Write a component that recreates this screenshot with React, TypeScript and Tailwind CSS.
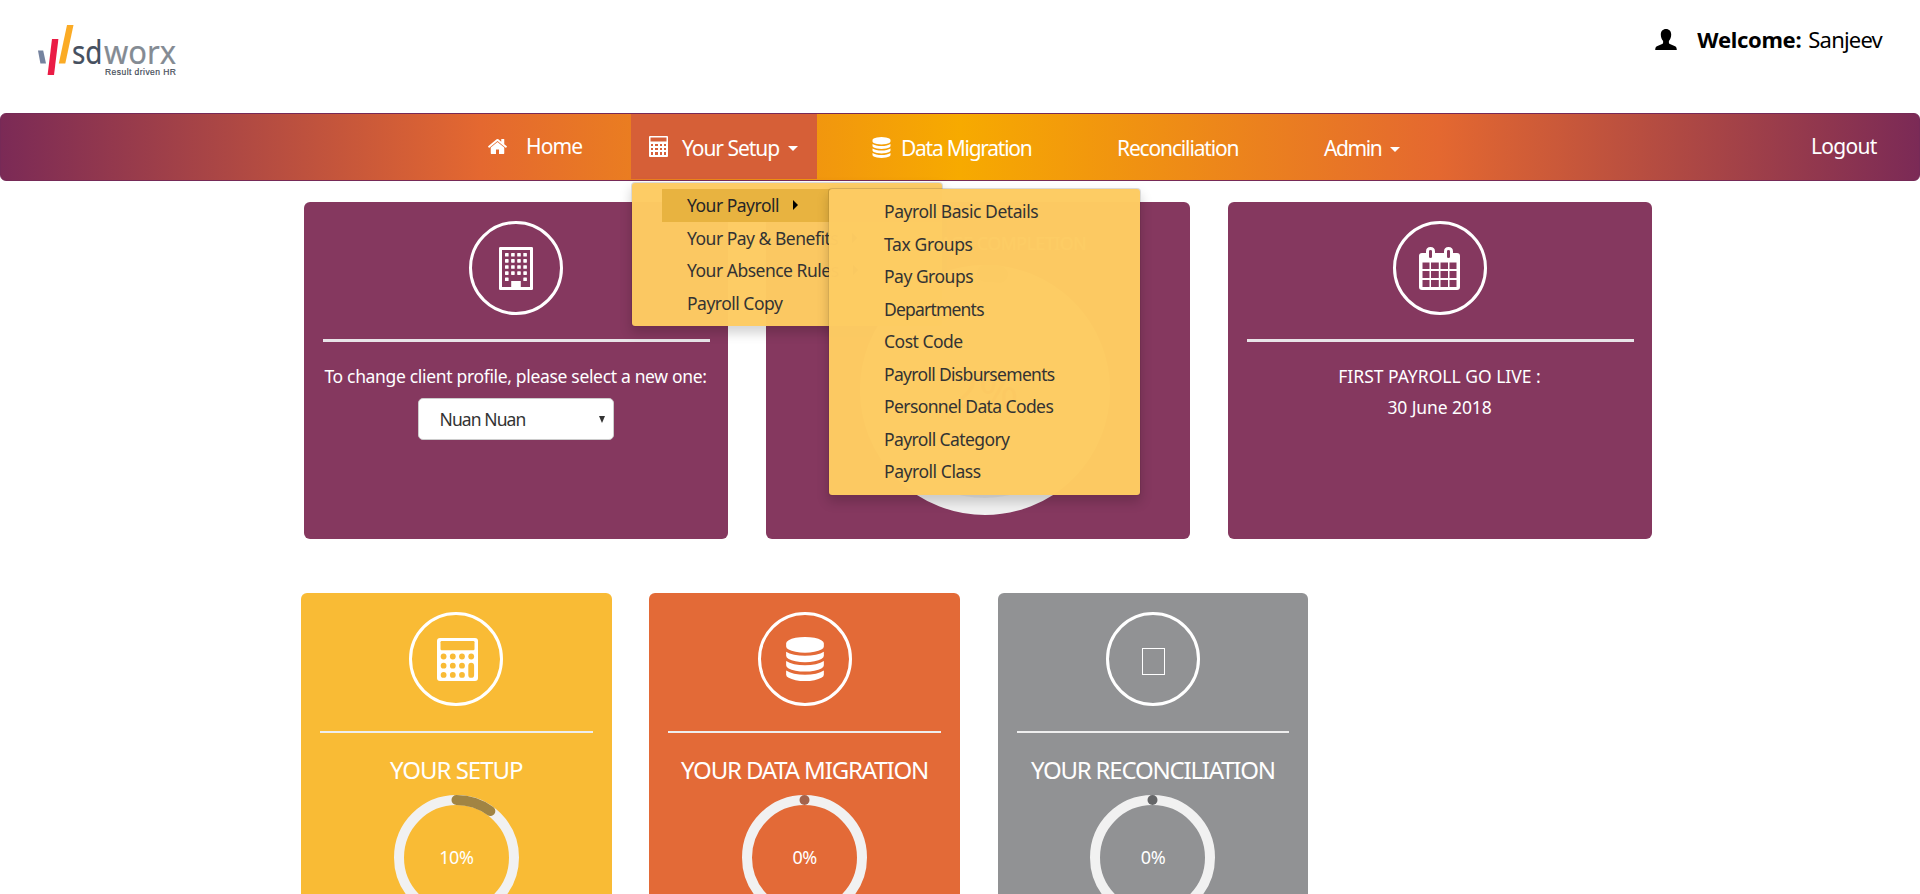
import React from "react";

const HOME =
  "M1472 992v480q0 26-19 45t-45 19h-384v-384h-256v384h-384q-26 0-45-19t-19-45v-480q0-1 .5-3t.5-3l575-474 575 474q1 2 1 6zm223-69l-62 74q-8 9-21 11h-3q-13 0-21-7l-692-577-692 577q-12 8-24 7-13-2-21-11l-62-74q-8-10-7-23.5t11-21.5l719-599q32-26 76-26t76 26l244 204v-195q0-14 9-23t23-9h192q14 0 23 9t9 23v408l219 182q10 8 11 21.5t-7 23.5z";
const DATABASE =
  "M896 768q237 0 443-43t325-127v170q0 69-103 128t-280 93.5-385 34.5-385-34.5-280-93.5-103-128v-170q119 84 325 127t443 43zm0 768q237 0 443-43t325-127v170q0 69-103 128t-280 93.5-385 34.5-385-34.5-280-93.5-103-128v-170q119 84 325 127t443 43zm0-384q237 0 443-43t325-127v170q0 69-103 128t-280 93.5-385 34.5-385-34.5-280-93.5-103-128v-170q119 84 325 127t443 43zm0-1152q208 0 385 34.5t280 93.5 103 128v128q0 69-103 128t-280 93.5-385 34.5-385-34.5-280-93.5-103-128v-128q0-69 103-128t280-93.5 385-34.5z";

function Logo() {
  return (
    <svg width="142" height="54" viewBox="0 0 142 54" className="block">
      <path d="M0 25.5h5.2L8 38.5H2.4z" fill="#75839f" />
      <path d="M14 14h6.4l-4.4 36H9.6z" fill="#ea1c45" />
      <path d="M29 0h6.5l-8.2 38.500h-6.500z" fill="#fbab25" />
      <text x="34" y="38.500" fontFamily="'Noto Sans', sans-serif" fontSize="32" textLength="30.500" lengthAdjust="spacingAndGlyphs" fill="#46505f" stroke="#46505f" strokeWidth="0.2">
        sd
      </text>
      <text x="66" y="38.500" fontFamily="'Noto Sans', sans-serif" fontSize="32" textLength="72" lengthAdjust="spacingAndGlyphs" fill="#848b93" stroke="#848b93" strokeWidth="0.2">
        worx
      </text>
      <text x="67" y="49.700" fontFamily="'Liberation Sans', sans-serif" fontSize="8.500" textLength="71" stroke="#444c58" strokeWidth="0.2" fill="#444c58">
        Result driven HR
      </text>
    </svg>
  );
}

function UserIcon() {
  return (
    <svg width="22" height="21" viewBox="0 0 22 21" className="block">
      <path d="M11 0c3.200 0 5.200 2.200 5.200 5.600 0 2.800-1 5-2.300 6.400v1.600c0 .8.3 1.200 1 1.500l4.600 1.900c1.600.7 2.200 1.600 2.300 4H.2c.1-2.400.7-3.300 2.300-4l4.600-1.900c.7-.3 1-.7 1-1.500V12C6.800 10.600 5.800 8.400 5.800 5.600 5.800 2.200 7.800 0 11 0z" />
    </svg>
  );
}

function CalcGridIcon() {
  return (
    <svg width="19" height="21" viewBox="0 0 19 21" className="block" fill="white" fillRule="evenodd">
      <path d="M1 0h17a1 1 0 0 1 1 1v19a1 1 0 0 1-1 1H1a1 1 0 0 1-1-1V1a1 1 0 0 1 1-1zM1.500 1.500v4h16v-4zM2 8v2h2V8zM6 8v2h3V8zM11 8v2h2V8zM15 8v2h2V8zM2 12v2h2v-2zM6 12v2h3v-2zM11 12v2h2v-2zM15 12v2h2v-2zM2 16v3h2v-3zM6 16v3h3v-3zM11 16v3h2v-3zM15 16v3h2v-3z" />
    </svg>
  );
}

function BuildingIcon() {
  const dots: [number, number][] = [];
  for (let r = 0; r < 5; r++)
    for (let c = 0; c < 4; c++) if (r < 4 || c === 0 || c === 3) dots.push([6 + c * 6.1, 6 + r * 6.1]);
  return (
    <svg width="34" height="43" viewBox="0 0 34 43" className="block" fill="white">
      <path fillRule="evenodd" d="M1.200 0h31.600q1.200 0 1.200 1.200v40.600q0 1.200-1.200 1.200H1.200Q0 43 0 41.800V1.200Q0 0 1.200 0zM3 3v37h9.200v-6h9.600v6H31V3z" />
      {dots.map(([x, y]) => (
        <rect key={`${x}-${y}`} x={x} y={y} width="3.6" height="3.6" rx="0.6" />
      ))}
    </svg>
  );
}

function CalendarIcon() {
  return (
    <svg width="41" height="43" viewBox="0 0 41 43" className="block" fill="white">
      <path fillRule="evenodd" d="M3 6h4V4.500Q7 0 11.500 0T16 4.500V6h9V4.500Q25 0 29.500 0T34 4.500V6h4q3 0 3 3v31q0 3-3 3H3q-3 0-3-3V9q0-3 3-3zM10 4v6q0 1 1.500 1T13 10V4q0-1-1.500-1T10 4zM28 4v6q0 1 1.500 1T31 10V4q0-1-1.500-1T28 4zM3.500 15.500v6.500h7v-6.500zM12 15.500v6.500h7.800v-6.500zM21.500 15.500v6.500h7.500v-6.500zM30.500 15.500v6.500h7v-6.500zM3.500 24v7h7v-7zM12 24v7h7.800v-7zM21.500 24v7h7.500v-7zM30.500 24v7h7v-7zM3.500 33v7h7v-7zM12 33v7h7.800v-7zM21.500 33v7h7.500v-7zM30.500 33v7h7v-7z" />
    </svg>
  );
}

function CalculatorIcon() {
  const keys: [number, number][] = [];
  for (let r = 0; r < 3; r++) for (let c = 0; c < 4; c++) if (r === 0 || c < 3) keys.push([6.6 + c * 9.2, 18.500 + r * 9.2]);
  return (
    <svg width="41" height="43" viewBox="0 0 41 43" className="ml-[2px] block">
      <rect width="41" height="43" rx="3" fill="white" />
      <g fill="#f9bb35">
        <rect x="3.500" y="3" width="34" height="9.200" rx="1.200" />
        {keys.map(([x, y]) => (
          <circle key={`${x}-${y}`} cx={x} cy={y} r="2.900" />
        ))}
        <rect x="31.300" y="24.800" width="5.800" height="15" rx="2.900" />
      </g>
    </svg>
  );
}

function DatabaseIcon({ size }: { size: number }) {
  return (
    <svg width={size} height={size} viewBox="0 0 1792 1792" className="block shrink-0" fill="white">
      <path d={DATABASE} />
    </svg>
  );
}

function Caret() {
  return <span className="mt-1 block border-x-[5px] border-t-[5px] border-x-transparent border-t-white" />;
}

function IconCircle({ children }: { children?: React.ReactNode }) {
  return (
    <div className="flex size-[94px] shrink-0 items-center justify-center rounded-full border-[3px] border-white">{children}</div>
  );
}

function TopCard({ children }: { children?: React.ReactNode }) {
  return (
    <div className="flex h-[337px] w-[424px] flex-col items-center rounded-md bg-[#85385f] pt-[19px] pr-[19.500px] pl-[18.500px] text-[17.500px] text-white">
      {children}
    </div>
  );
}

function CardDivider() {
  return <div className="mt-[24px] ml-[1px] h-[3px] w-[387px] shrink-0 bg-[#e8e4e8]" />;
}

function Ring({ size, stroke, value, color, fill = "none" }: { size: number; stroke: number; value: number; color: string; fill?: string }) {
  const c = size / 2;
  const r = (size - stroke) / 2;
  const length = 2 * Math.PI * r;
  return (
    <svg width={size} height={size} className="col-start-1 row-start-1 block">
      <circle cx={c} cy={c} r={r} fill={fill} stroke="#f1f1f1" strokeWidth={stroke} />
      <circle
        cx={c}
        cy={c}
        r={r}
        fill="none"
        stroke={color}
        strokeWidth={stroke}
        strokeLinecap="round"
        strokeDasharray={`${Math.max((length * value) / 100, 0.01)} ${length}`}
        transform={`rotate(-90 ${c} ${c})`}
      />
    </svg>
  );
}

function StatusCard({
  className,
  title,
  value,
  color,
  titleClass,
  children,
}: {
  className: string;
  title: string;
  value: number;
  color: string;
  titleClass: string;
  children?: React.ReactNode;
}) {
  return (
    <div className={`flex h-[301px] w-[310.67px] flex-col items-center rounded-t-md px-[19px] pt-[19px] text-white ${className}`}>
      <IconCircle>{children}</IconCircle>
      <div className="mt-[25px] h-0.5 w-full shrink-0 bg-[#eeeeee]" />
      <h2 className={`mt-[23px] shrink-0 text-[24px] leading-7 whitespace-nowrap ${titleClass}`}>{title}</h2>
      <div className="mt-[11px] grid shrink-0 place-items-center">
        <Ring size={125} stroke={10} value={value} color={color} />
        <span className="col-start-1 row-start-1 -mt-px text-[18px] leading-6 tracking-[-0.4px]">{value}%</span>
      </div>
    </div>
  );
}

const SUBMENU: [string, string][] = [
  ["Payroll Basic Details", "tracking-[-0.45px]"],
  ["Tax Groups", "tracking-[-0.35px]"],
  ["Pay Groups", "tracking-[-0.5px]"],
  ["Departments", "tracking-[-0.8px]"],
  ["Cost Code", "tracking-[-0.5px]"],
  ["Payroll Disbursements", "tracking-[-0.68px]"],
  ["Personnel Data Codes", "tracking-[-0.6px]"],
  ["Payroll Category", "tracking-[-0.6px]"],
  ["Payroll Class", "tracking-[-0.45px]"],
];

function MenuArrow() {
  return <span className="ml-3.5 block border-y-[5px] border-l-[5px] border-y-transparent border-l-black" />;
}

function SetupMenu() {
  return (
    <div className="absolute top-[68px] left-0 z-10 h-[145px] w-[312px] rounded border border-black/15 bg-[#fdcb62]/98 bg-clip-padding pt-[6px] pl-[30px] text-[17.500px] leading-[32.500px] tracking-[-0.5px] whitespace-nowrap text-[#333333] shadow-[0_6px_12px_rgba(0,0,0,0.175)]">
      <div className="flex items-center bg-[#e8b340] pl-[25px] text-[#262626]">
        <span>Your Payroll</span>
        <MenuArrow />
      </div>
      <div className="flex items-center pl-[25px]">
        <span>Your Pay &amp; Benefits</span>
        <MenuArrow />
      </div>
      <div className="flex items-center pl-[25px]">
        <span>Your Absence Rules</span>
        <MenuArrow />
      </div>
      <div className="pl-[25px]">Payroll Copy</div>
      <div className="absolute top-[5px] left-[196px] h-[308px] w-[313px] rounded border border-black/15 bg-[#fdcb62]/99 bg-clip-padding pt-[6px] pl-[55px] shadow-[0_6px_12px_rgba(0,0,0,0.175)]">
        {SUBMENU.map(([label, cls]) => (
          <div key={label} className={cls}>
            {label}
          </div>
        ))}
      </div>
    </div>
  );
}

export default function App() {
  return (
    <div className="h-[894px] w-[1920px] overflow-hidden bg-white font-['Noto_Sans',sans-serif]">
      <header className="flex h-[113px] items-start justify-between pt-[25px] pr-[38px] pl-[38px]">
        <Logo />
        <div className="-mt-px flex items-center text-[22px] leading-[30px] text-black">
          <UserIcon />
          <span className="ml-[20px] font-bold tracking-[-0.3px]">Welcome:</span>
          <span className="ml-[7px] tracking-[-0.8px]">Sanjeev</span>
        </div>
      </header>

      <nav className="flex h-[68px] rounded-md border border-[#762a57] bg-[linear-gradient(90deg,#7b2a56_0%,#e46830_25%,#f7aa00_50%,#e46830_75%,#7b2a56_100%)] text-[21px] leading-[66px] whitespace-nowrap text-white">
        <div className="flex w-[630px] items-center pl-[486px]">
          <svg width="21" height="21" viewBox="0 0 1792 1792" fill="white" className="-mt-0.5">
            <path d={HOME} />
          </svg>
          <span className="-mt-0.5 ml-[18px] tracking-[-0.9px]">Home</span>
        </div>
        <div className="relative flex h-[65px] w-[186px] items-center bg-[#d65f37] pl-[18px]">
          <CalcGridIcon />
          <span className="mt-[2px] ml-[14px] tracking-[-1.05px]">Your Setup</span>
          <span className="ml-[9px]">
            <Caret />
          </span>
          <SetupMenu />
        </div>
        <div className="flex w-[300px] items-center pl-[54px]">
          <DatabaseIcon size={21} />
          <span className="mt-px ml-[9px] tracking-[-1.25px]">Data Migration</span>
        </div>
        <div className="mt-px w-[207px] tracking-[-1.15px]">Reconciliation</div>
        <div className="flex w-[487px] items-center">
          <span className="mt-px tracking-[-1.4px]">Admin</span>
          <span className="ml-[9px]">
            <Caret />
          </span>
        </div>
        <div className="-mt-px tracking-[-0.7px]">Logout</div>
      </nav>

      <main>
        <section className="mt-[21px] ml-[304px] flex gap-[38px]">
          <TopCard>
            <IconCircle>
              <BuildingIcon />
            </IconCircle>
            <CardDivider />
            <p className="mt-[22px] leading-6 tracking-[-0.33px] whitespace-nowrap">To change client profile, please select a new one:</p>
            <div className="mt-[10px] flex h-[42px] w-[196px] items-center justify-between rounded-[5px] border border-[#cccccc] bg-white pr-[8px] pl-[21px] text-[#333333]">
              <span className="tracking-[-0.9px]">Nuan Nuan</span>
              <span className="block border-x-[3.5px] border-t-[7px] border-x-transparent border-t-[#333333]" />
            </div>
          </TopCard>
          <TopCard>
            <h2 className="mt-[10px] leading-6 tracking-[-0.3px]">PERCENTAGE COMPLETION</h2>
            <div className="mt-[10px] ml-[15px] grid shrink-0 place-items-center">
              <Ring size={250} stroke={17} value={2} color="#b18a9d" fill="#e6e6e6" />
              <span className="col-start-1 row-start-1 text-[48px] leading-none text-[#85385f]">2%</span>
            </div>
          </TopCard>
          <TopCard>
            <IconCircle>
              <CalendarIcon />
            </IconCircle>
            <CardDivider />
            <p className="mt-[22px] leading-6">FIRST PAYROLL GO LIVE :</p>
            <p className="mt-[7px] leading-6 tracking-[-0.1px]">30 June 2018</p>
          </TopCard>
        </section>

        <section className="mt-[54px] ml-[301px] flex gap-[37.67px]">
          <StatusCard className="bg-[#f9bb35]" title="YOUR SETUP" titleClass="tracking-[-1px]" value={10} color="#a18443">
            <CalculatorIcon />
          </StatusCard>
          <StatusCard className="bg-[#e36a37]" title="YOUR DATA MIGRATION" titleClass="tracking-[-1.15px]" value={0} color="#a4634b">
            <DatabaseIcon size={44} />
          </StatusCard>
          <StatusCard className="bg-[#919294]" title="YOUR RECONCILIATION" titleClass="tracking-[-1.2px]" value={0} color="#656668">
            <span className="mt-[5px] ml-px block h-[27px] w-[23px] border border-white" />
          </StatusCard>
        </section>
      </main>
    </div>
  );
}
